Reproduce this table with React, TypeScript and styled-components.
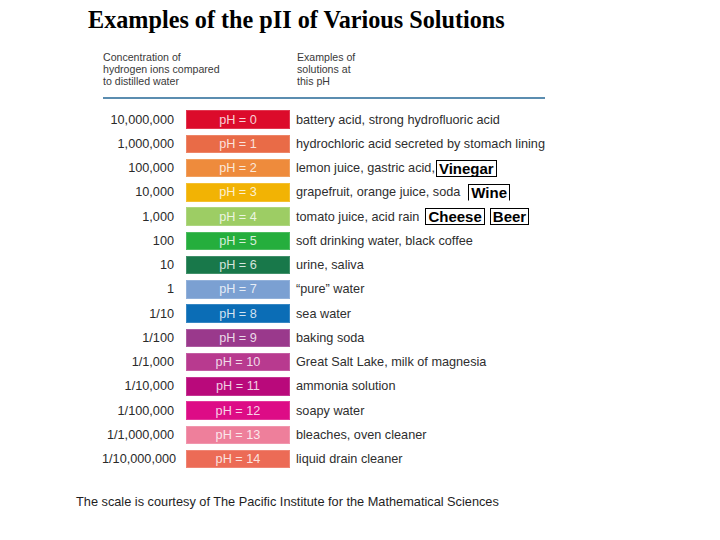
import React from "react";
import styled, { createGlobalStyle } from "styled-components";

const GlobalStyle = createGlobalStyle`
  html, body {
    margin: 0;
    padding: 0;
    background: #ffffff;
  }
  body {
    width: 720px;
    height: 540px;
    overflow: hidden;
    font-family: "Liberation Sans", Arial, sans-serif;
  }
`;

const Page = styled.div`
  width: 720px;
  height: 540px;
  box-sizing: border-box;
  padding-top: 6px;
  display: flex;
  flex-direction: column;
  background: #ffffff;
`;

const Title = styled.h1`
  margin: 0 0 0 88px;
  font-family: "Liberation Serif", "Times New Roman", serif;
  font-weight: bold;
  font-size: 24.2px;
  line-height: 27px;
  color: #000;
`;

const Figure = styled.div`
  margin: 19px 0 0 103px;
  width: 442px;
  display: flex;
  flex-direction: column;
`;

const HeaderRow = styled.div`
  display: grid;
  grid-template-columns: 194px 1fr;
  font-size: 10.6px;
  line-height: 11.8px;
  color: #3a3a3a;
`;

const HeaderCell = styled.div`
  white-space: pre-line;
`;

const Rule = styled.div`
  margin-top: 10px;
  height: 2px;
  background: #5b8db0;
`;

const Rows = styled.div`
  margin-top: 8px;
  display: flex;
  flex-direction: column;
  margin-left: -1px;
`;

const Row = styled.div`
  display: flex;
  align-items: center;
  height: 24.28px;
  font-size: 12.7px;
  color: #2e2e2e;
`;

const Value = styled.div`
  width: 72px;
  text-align: right;
  white-space: nowrap;
  color: #2a2a2a;
`;

const Bar = styled.div<{ $color: string }>`
  margin-left: 12px;
  width: 104px;
  height: 18.5px;
  box-sizing: border-box;
  background: ${(p) => p.$color};
  box-shadow: inset 0 0 0 1px rgba(255, 255, 255, 0.18);
  color: rgba(255, 255, 255, 0.82);
  display: flex;
  align-items: center;
  justify-content: center;
  font-size: 12.7px;
`;

const Desc = styled.div`
  margin-left: 6px;
  display: flex;
  align-items: center;
  white-space: nowrap;
`;

const Tag = styled.span<{ $gap: number; $open?: boolean }>`
  margin-left: ${(p) => p.$gap}px;
  display: inline-block;
  border: 1px solid #000;
  ${(p) => (p.$open ? "border-bottom-color: transparent;" : "")}
  background: #fff;
  padding: 0 2px;
  font-family: "Liberation Sans", Arial, sans-serif;
  font-weight: bold;
  font-size: 15px;
  line-height: 15px;
  color: #000;
`;

const Footer = styled.div`
  margin: 23px 0 0 76px;
  font-size: 12.75px;
  color: #1e1e1e;
`;

type TagDef = { label: string; gap: number; open?: boolean };
type RowDef = { value: string; ph: number; color: string; desc: string; tags?: TagDef[] };

const rows: RowDef[] = [
  { value: "10,000,000", ph: 0, color: "#dc0b2b", desc: "battery acid, strong hydrofluoric acid" },
  { value: "1,000,000", ph: 1, color: "#e96b47", desc: "hydrochloric acid secreted by stomach lining" },
  { value: "100,000", ph: 2, color: "#ee8b3c", desc: "lemon juice, gastric acid,", tags: [{ label: "Vinegar", gap: 1 }] },
  { value: "10,000", ph: 3, color: "#f2b304", desc: "grapefruit, orange juice, soda", tags: [{ label: "Wine", gap: 8, open: true }] },
  {
    value: "1,000",
    ph: 4,
    color: "#9dcd64",
    desc: "tomato juice, acid rain",
    tags: [
      { label: "Cheese", gap: 6 },
      { label: "Beer", gap: 5 },
    ],
  },
  { value: "100", ph: 5, color: "#25ae3d", desc: "soft drinking water, black coffee" },
  { value: "10", ph: 6, color: "#18784a", desc: "urine, saliva" },
  { value: "1", ph: 7, color: "#7ba0d2", desc: "\u201cpure\u201d water" },
  { value: "1/10", ph: 8, color: "#0b6db6", desc: "sea water" },
  { value: "1/100", ph: 9, color: "#9a398c", desc: "baking soda" },
  { value: "1/1,000", ph: 10, color: "#b83a8f", desc: "Great Salt Lake, milk of magnesia" },
  { value: "1/10,000", ph: 11, color: "#b9097b", desc: "ammonia solution" },
  { value: "1/100,000", ph: 12, color: "#dd0c86", desc: "soapy water" },
  { value: "1/1,000,000", ph: 13, color: "#ee7f9b", desc: "bleaches, oven cleaner" },
  { value: "1/10,000,000", ph: 14, color: "#ec6b56", desc: "liquid drain cleaner" },
];

export default function App() {
  return (
    <Page>
      <GlobalStyle />
      <Title>Examples of the pII of Various Solutions</Title>
      <Figure>
        <HeaderRow>
          <HeaderCell>{"Concentration of\nhydrogen ions compared\nto distilled water"}</HeaderCell>
          <HeaderCell>{"Examples of\nsolutions at\nthis pH"}</HeaderCell>
        </HeaderRow>
        <Rule />
        <Rows>
          {rows.map((r) => (
            <Row key={r.ph}>
              <Value>{r.value}</Value>
              <Bar $color={r.color}>pH = {r.ph}</Bar>
              <Desc>
                {r.desc}
                {r.tags?.map((t) => (
                  <Tag key={t.label} $gap={t.gap} $open={t.open}>
                    {t.label}
                  </Tag>
                ))}
              </Desc>
            </Row>
          ))}
        </Rows>
      </Figure>
      <Footer>The scale is courtesy of The Pacific Institute for the Mathematical Sciences</Footer>
    </Page>
  );
}
